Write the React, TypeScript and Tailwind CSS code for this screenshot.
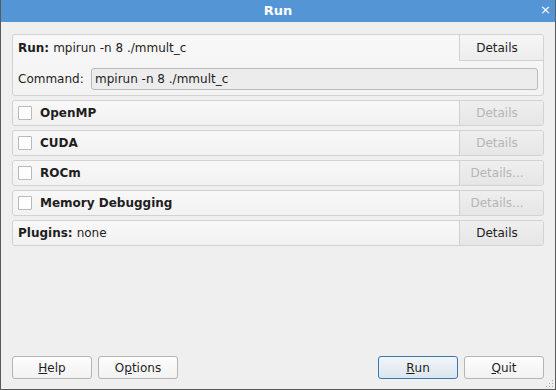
import React from 'react'

const font = { fontFamily: '"DejaVu Sans", Verdana, sans-serif' }

function DetailsButton({ label = 'Details', disabled = false, tab = false }: { label?: string; disabled?: boolean; tab?: boolean }) {
  return (
    <div
      className={
        'flex w-[84px] shrink-0 items-center justify-center border-l border-[#d0d0d0] pr-[9px] text-[12px] ' +
        (tab ? 'h-[26px] border-b bg-gradient-to-b from-[#f6f6f6] to-[#ededed] ' : 'h-full bg-gradient-to-b from-[#efefef] to-[#e6e6e6] ') +
        (disabled ? 'text-[#b6b6b6]' : 'text-[#1e1e1e]')
      }
    >
      {label}
    </div>
  )
}

function OptionRow({ label, details = 'Details' }: { label: string; details?: string }) {
  return (
    <div className="flex h-[26px] items-stretch overflow-hidden rounded-[3px] border border-[#d2d2d2] bg-gradient-to-b from-[#f8f8f8] to-[#f2f2f2]">
      <div className="flex flex-1 items-center pl-[5px]">
        <span className="h-[14px] w-[14px] rounded-[1px] border border-[#b9b9b9] bg-white" />
        <span className="ml-[8px] text-[12px] font-bold text-[#1e1e1e]">{label}</span>
      </div>
      <DetailsButton label={details} disabled />
    </div>
  )
}

function Button({ children, primary = false }: { children: React.ReactNode; primary?: boolean }) {
  return (
    <div
      className={
        'flex h-[23px] w-[80px] items-center justify-center rounded-[3px] border text-[12px] text-[#1e1e1e] ' +
        (primary
          ? 'border-[#3a78b0] bg-gradient-to-b from-[#f1f5f9] to-[#dce5ee]'
          : 'border-[#b5b5b5] bg-gradient-to-b from-[#fdfdfd] to-[#f2f2f2]')
      }
    >
      {children}
    </div>
  )
}

export default function App() {
  return (
    <div style={font} className="relative flex h-[390px] w-[556px] flex-col border-x border-b border-[#5a5a5a] bg-[#efefef]">
      <div className="relative flex h-[22px] shrink-0 items-center justify-center bg-[#5495d6] text-[13px] font-bold text-white">
        Run
        <span className="absolute right-[4px] top-[3px] text-[13px] font-normal leading-none">×</span>
      </div>

      <div className="flex flex-1 flex-col px-[11px] pt-[12px]">
        <div className="flex flex-col gap-[4px]">
          <div className="overflow-hidden rounded-[3px] border border-[#d2d2d2] bg-gradient-to-b from-[#f8f8f8] to-[#f3f3f3]">
            <div className="flex h-[26px] items-start">
              <div className="flex h-[26px] flex-1 items-center pl-[5px] text-[12px] text-[#1e1e1e]">
                <span className="font-bold">Run:</span>
                <span className="ml-[4px]">mpirun -n 8 ./mmult_c</span>
              </div>
              <DetailsButton tab />
            </div>
            <div className="flex items-center px-[5px] pb-[5px] pt-[7px]">
              <span className="w-[73px] shrink-0 text-[12px] text-[#1e1e1e]">Command:</span>
              <div className="flex h-[22px] flex-1 items-center rounded-[3px] border border-[#b9b9b9] bg-[#ececec] pl-[3px] text-[12px] text-[#1e1e1e]">
                mpirun -n 8 ./mmult_c
              </div>
            </div>
          </div>

          <OptionRow label="OpenMP" />
          <OptionRow label="CUDA" />
          <OptionRow label="ROCm" details="Details..." />
          <OptionRow label="Memory Debugging" details="Details..." />

          <div className="flex h-[26px] items-stretch overflow-hidden rounded-[3px] border border-[#d2d2d2] bg-gradient-to-b from-[#f8f8f8] to-[#f2f2f2]">
            <div className="flex flex-1 items-center pl-[5px] text-[12px] text-[#1e1e1e]">
              <span className="font-bold">Plugins:</span>
              <span className="ml-[4px]">none</span>
            </div>
            <DetailsButton />
          </div>
        </div>

        <div className="mt-auto mb-[10px] flex items-center">
          <div className="flex gap-[6px]">
            <Button><span className="underline">H</span>elp</Button>
            <Button>O<span className="underline">p</span>tions</Button>
          </div>
          <div className="ml-auto flex gap-[6px]">
            <Button primary><span className="underline">R</span>un</Button>
            <Button><span className="underline">Q</span>uit</Button>
          </div>
        </div>
      </div>

      <svg className="absolute bottom-[1px] right-[1px]" width="10" height="10" viewBox="0 0 10 10">
        {[
          [8, 2], [5, 5], [8, 5], [2, 8], [5, 8], [8, 8],
        ].map(([x, y]) => (
          <rect key={`${x}-${y}`} x={x} y={y} width="1" height="1" fill="#a9a9a9" />
        ))}
      </svg>
    </div>
  )
}
